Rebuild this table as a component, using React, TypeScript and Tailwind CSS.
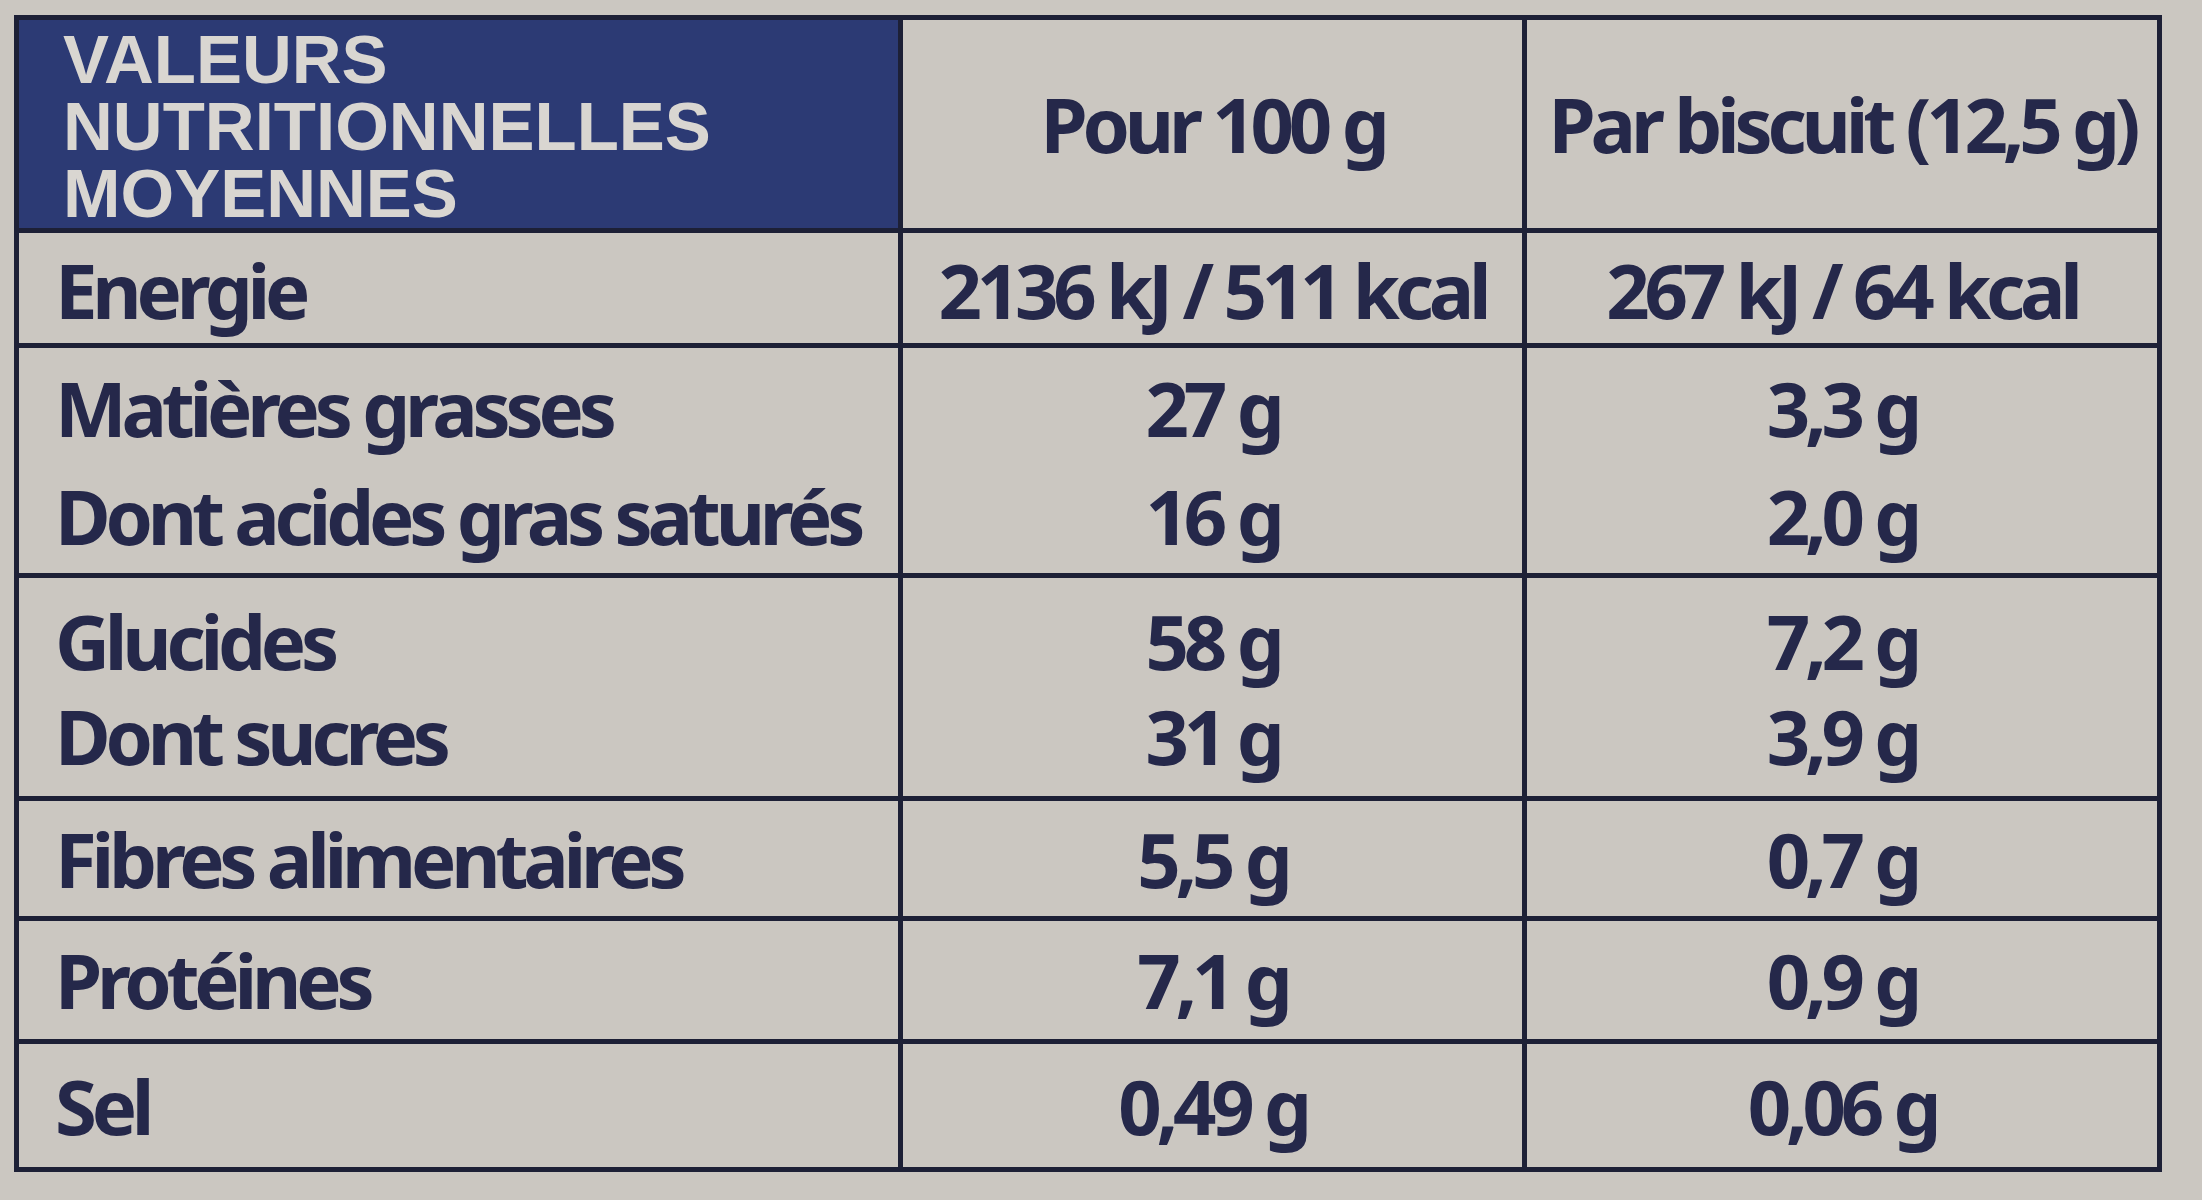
type Row = {
    labels: string[];
    per100: string[];
    perBiscuit: string[];
    height: string;
    lines: string;
};

const rows: Row[] = [
    {
        labels: ["Energie"],
        per100: ["2136 kJ / 511 kcal"],
        perBiscuit: ["267 kJ / 64 kcal"],
        height: "h-[115px]",
        lines: "justify-center",
    },
    {
        labels: ["Matières grasses", "Dont acides gras saturés"],
        per100: ["27 g", "16 g"],
        perBiscuit: ["3,3 g", "2,0 g"],
        height: "h-[230px]",
        lines: "pt-[6px] leading-[108px]",
    },
    {
        labels: ["Glucides", "Dont sucres"],
        per100: ["58 g", "31 g"],
        perBiscuit: ["7,2 g", "3,9 g"],
        height: "h-[223px]",
        lines: "pt-[15px] leading-[95px]",
    },
    {
        labels: ["Fibres alimentaires"],
        per100: ["5,5 g"],
        perBiscuit: ["0,7 g"],
        height: "h-[120px]",
        lines: "justify-center",
    },
    {
        labels: ["Protéines"],
        per100: ["7,1 g"],
        perBiscuit: ["0,9 g"],
        height: "h-[123px]",
        lines: "justify-center",
    },
    {
        labels: ["Sel"],
        per100: ["0,49 g"],
        perBiscuit: ["0,06 g"],
        height: "h-[128px]",
        lines: "justify-center",
    },
];

function Cell({ items, lines, align }: { items: string[]; lines: string; align: string }) {
    return (
        <div className={`flex flex-col ${lines} ${align} whitespace-nowrap`}>
            {items.map((t) => (
                <span key={t}>{t}</span>
            ))}
        </div>
    );
}

export default function App() {
    return (
        <div className="h-[1200px] w-[2202px] overflow-hidden bg-[#cbc7c1] pl-[14px] pt-[15px] font-['Noto_Sans',sans-serif] text-[76px] font-bold tracking-[-5.2px] text-[#25284a]">
            <div className="w-[2148px] border-[5px] border-[#1d2036]">
                <div className="grid h-[208px] grid-cols-[879px_624px_635px]">
                    <div className="flex flex-col bg-[#2c3a74] pl-[44px] pt-[6px] font-['Liberation_Sans',sans-serif] text-[69px] leading-[67px] tracking-normal text-[#d9d6d1]">
                        <span>VALEURS</span>
                        <span>NUTRITIONNELLES</span>
                        <span>MOYENNES</span>
                    </div>
                    <div className="flex items-center justify-center whitespace-nowrap border-l-[5px] border-[#1d2036]">
                        Pour 100 g
                    </div>
                    <div className="flex items-center justify-center whitespace-nowrap border-l-[5px] border-[#1d2036]">
                        Par biscuit (12,5 g)
                    </div>
                </div>

                {rows.map((row) => (
                    <div
                        key={row.labels[0]}
                        className={`grid grid-cols-[879px_624px_635px] border-t-[5px] border-[#1d2036] ${row.height}`}
                    >
                        <Cell items={row.labels} lines={row.lines} align="items-start pl-[36px]" />
                        <div className="border-l-[5px] border-[#1d2036]">
                            <Cell items={row.per100} lines={`h-full ${row.lines}`} align="items-center" />
                        </div>
                        <div className="border-l-[5px] border-[#1d2036]">
                            <Cell items={row.perBiscuit} lines={`h-full ${row.lines}`} align="items-center" />
                        </div>
                    </div>
                ))}
            </div>
        </div>
    );
}
